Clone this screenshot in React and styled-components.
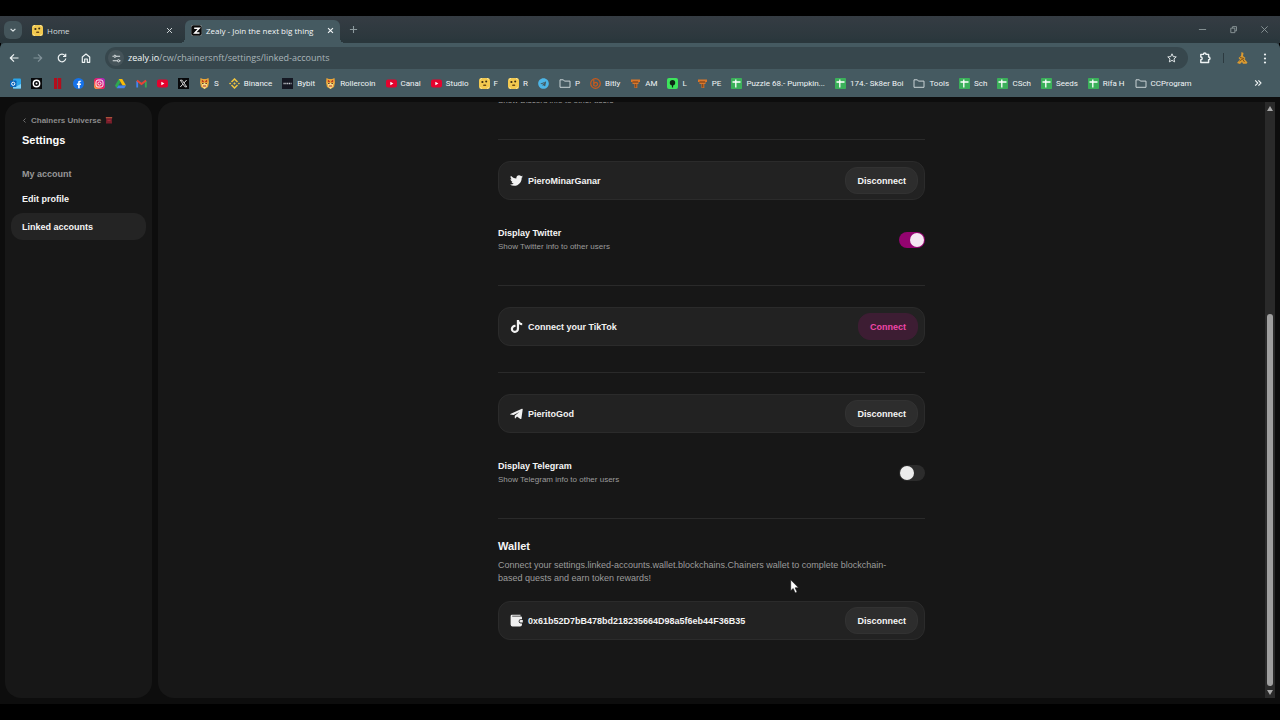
import React from 'react';
import styled, { createGlobalStyle } from 'styled-components';
import { FaTwitter, FaTiktok, FaFacebookF, FaTelegram } from 'react-icons/fa';

const GlobalStyle = createGlobalStyle`
  * {
    box-sizing: border-box;
  }

  body {
    margin: 0;
    background: #000;
    overflow: hidden;
    font-family: "Liberation Sans", Arial, sans-serif;
  }

  button {
    font: inherit;
    color: inherit;
    border: 0;
    padding: 0;
    background: none;
  }

  a {
    color: inherit;
    text-decoration: none;
  }

  svg {
    display: block;
    flex-shrink: 0;
  }
`;

const Screen = styled.div`
  display: flex;
  flex-direction: column;
  height: 100vh;
  padding: 16px 0;
`;

/* ---------- browser ---------- */

const TabStrip = styled.div`
  display: flex;
  align-items: center;
  height: 27px;
  flex-shrink: 0;
  padding: 0 6px 0 4px;
  background: linear-gradient(#353c43, #2a373c);
  font-family: "Open Sans", "Noto Sans", sans-serif;
  font-size: 8px;
  color: #dfe6e8;
`;

const TabSearch = styled.button`
  display: flex;
  align-items: center;
  justify-content: center;
  width: 18px;
  height: 18px;
  border-radius: 6px;
  background: #44555b;
`;

const Tab = styled.div`
  position: relative;
  display: flex;
  align-items: center;
  align-self: flex-end;
  gap: 4px;
  width: ${({ $active }) => ($active ? 155 : 153)}px;
  height: 23px;
  padding: 0 6px 3px;
  margin-left: ${({ $active }) => ($active ? 6 : 4)}px;
  border-radius: 6px 6px 0 0;
  background: ${({ $active }) => ($active ? '#455a61' : 'transparent')};
  color: ${({ $active }) => ($active ? '#f4f7f8' : '#d5dcde')};
  white-space: nowrap;

  &::before,
  &::after {
    content: '';
    display: ${({ $active }) => ($active ? 'block' : 'none')};
    position: absolute;
    bottom: 0;
    width: 5px;
    height: 5px;
  }

  &::before {
    right: 100%;
    background: radial-gradient(circle at 0 0, transparent 5px, #455a61 5px);
  }

  &::after {
    left: 100%;
    background: radial-gradient(circle at 100% 0, transparent 5px, #455a61 5px);
  }
`;

const TabTitle = styled.span`
  flex: 1;
`;

const WindowButtons = styled.div`
  display: flex;
  gap: 22px;
  margin-left: auto;
  padding-right: 5px;
  color: #8d989b;
`;

const NewTab = styled.button`
  margin-left: 9px;
  color: #8d9a9e;
`;

const Toolbar = styled.div`
  display: flex;
  align-items: center;
  gap: 14px;
  height: 30px;
  flex-shrink: 0;
  padding: 0 10px 0 9px;
  border-radius: 5px 5px 0 0;
  background: #455a61;
  box-shadow: 0 -5px 0 -1px #2a373c;
  color: #eef3f4;
`;

const NavButton = styled.button`
  color: ${({ $dim }) => ($dim ? '#82939a' : '#eef3f4')};
`;

const ToolbarActions = styled.div`
  display: flex;
  align-items: center;
  gap: 12px;
`;

const AddressBar = styled.label`
  display: flex;
  align-items: center;
  gap: 4px;
  flex: 1;
  height: 22px;
  margin-right: -3px;
  padding: 0 11px 0 3px;
  border-radius: 11px;
  background: #37474d;
`;

const SiteInfo = styled.button`
  display: flex;
  align-items: center;
  justify-content: center;
  width: 16px;
  height: 16px;
  border-radius: 8px;
  background: #455359;
`;

const Url = styled.span`
  flex: 1;
  font-family: "Open Sans", "Noto Sans", sans-serif;
  font-size: 9px;
  line-height: 12px;
  color: #a9b5b9;

  b {
    font-weight: 400;
    color: #f4f7f8;
  }
`;

const ToolbarDivider = styled.span`
  width: 1px;
  height: 10px;
  background: #2c3a40;
`;

const BookmarksBar = styled.nav`
  display: flex;
  align-items: center;
  gap: 10px;
  height: 24px;
  flex-shrink: 0;
  padding: 0 18px 4px 10px;
  background: #455a61;
  font-family: Roboto, "Open Sans", sans-serif;
  font-size: 8px;
  color: #f0f4f5;
  white-space: nowrap;
`;

const Bookmark = styled.a`
  display: flex;
  align-items: center;
  gap: 4px;
`;

const More = styled.button`
  margin-left: auto;
`;

/* ---------- page ---------- */

const Page = styled.div`
  display: flex;
  flex: 1;
  min-height: 0;
  padding: 5px 5px 6px;
  background: #0d0d0d;
`;

const Sidebar = styled.aside`
  width: 147px;
  flex-shrink: 0;
  margin-right: 6px;
  padding: 12px 6px;
  border-radius: 16px;
  background: #171717;
`;

const BackLink = styled.a`
  display: flex;
  align-items: center;
  gap: 4px;
  height: 12px;
  padding-left: 11px;
  font-size: 8px;
  font-weight: 700;
  color: #8c8c8c;
`;

const SidebarTitle = styled.h1`
  margin: 7px 0 21px;
  padding-left: 11px;
  font-size: 11px;
  line-height: 14px;
  color: #fff;
`;

const SidebarLabel = styled.h2`
  margin: 0 0 5px;
  padding-left: 11px;
  font-size: 9px;
  line-height: 12px;
  color: #979797;
`;

const SidebarItem = styled.a`
  display: flex;
  align-items: center;
  height: 27px;
  margin-bottom: 1px;
  padding-left: 11px;
  border-radius: 12px;
  background: ${({ $active }) => ($active ? '#242424' : 'transparent')};
  font-size: 9px;
  font-weight: 700;
  color: #f5f5f5;
`;

const Main = styled.main`
  flex: 1;
  overflow: hidden;
  border-radius: 16px 0 0 16px;
  background: #171717;
`;

const Content = styled.div`
  max-width: 427px;
  margin: -8px auto 0;
`;

const Caption = styled.span`
  display: block;
  font-size: 8px;
  line-height: 14px;
  color: #9c9c9c;
`;

const Section = styled.section`
  margin-top: ${({ $afterRow }) => ($afterRow ? 31 : 26)}px;
  padding-top: 21px;
  border-top: 1px solid #2a2a2a;
`;

const Card = styled.div`
  display: flex;
  align-items: center;
  gap: 5px;
  height: 39px;
  padding: 0 6px 0 11px;
  border: 1px solid #2b2b2b;
  border-radius: 12px;
  background: #222;
  font-size: 9px;
  font-weight: 700;
  color: #f2f2f2;
`;

const CardButton = styled.button`
  height: 27px;
  margin-left: auto;
  padding: 0 11px;
  border: 1px solid ${({ $accent }) => ($accent ? '#3d1d33' : '#323232')};
  border-radius: 12px;
  background: ${({ $accent }) => ($accent ? '#3d1d33' : '#2d2d2d')};
  color: ${({ $accent }) => ($accent ? '#ee46a8' : '#f5f5f5')};
`;

const SettingRow = styled.label`
  display: flex;
  align-items: center;
  justify-content: space-between;
  margin-top: 26px;
`;

const SettingName = styled.span`
  display: block;
  font-size: 9px;
  font-weight: 700;
  line-height: 14px;
  color: #f5f5f5;
`;

const Switch = styled.input`
  appearance: none;
  display: flex;
  align-items: center;
  width: 26px;
  height: 16px;
  margin: 0;
  padding: 0 1px;
  border-radius: 8px;
  background: #2c2c2c;

  &::before {
    content: '';
    width: 14px;
    height: 14px;
    border-radius: 50%;
    background: #ededed;
  }

  &:checked {
    justify-content: flex-end;
    background: #930470;
  }

  &:checked::before {
    background: #f5e6f2;
  }
`;

const WalletTitle = styled.h2`
  margin: 0 0 7px;
  font-size: 11px;
  line-height: 12px;
  color: #f5f5f5;
`;

const WalletText = styled.p`
  position: relative;
  margin: 0 0 16px;
  padding-right: 24px;
  font-size: 9px;
  line-height: 13px;
  color: #9c9c9c;
`;

const Pointer = styled.svg`
  position: absolute;
  top: 20px;
  left: 292px;
`;

const Scrollbar = styled.div`
  display: flex;
  flex-direction: column;
  align-items: center;
  width: 10px;
  padding: 4px 0 3px;
  background: #2a2a2a;
`;

const ScrollTrack = styled.div`
  display: flex;
  flex-direction: column;
  justify-content: flex-end;
  flex: 1;
  width: 6px;
  margin: 2px 0 4px;
`;

const ScrollThumb = styled.div`
  height: 65%;
  border-radius: 3px;
  background: #9f9f9f;
`;

/* ---------- icons ---------- */

const Stroke = ({ d, size = 10, width = 1.2 }) => (
  <svg width={size} height={size} viewBox="0 0 10 10" fill="none" stroke="currentColor" strokeWidth={width} strokeLinejoin="round">
    <path d={d} />
  </svg>
);

const Glyph = ({ children }) => (
  <svg width="11" height="11" viewBox="0 0 11 11">{children}</svg>
);

const Chainers = () => (
  <Glyph>
    <rect width="11" height="11" rx="2.5" fill="#f2c94f" />
    <path d="M1 1.500L3 .3M8 .3l2 1.200M1 9.500l2 1M8 10.500l2-1" stroke="#fae6a0" />
    <circle cx="3.400" cy="4" r="1.100" fill="#3a2a12" />
    <circle cx="7.200" cy="3.400" r="1" fill="#3a2a12" />
    <rect x="4.200" y="6.500" width="3" height="1.600" rx=".6" fill="#6b4a18" />
  </Glyph>
);

const Hamster = () => (
  <Glyph>
    <path d="M1.500 0l2.300 1h3.400l2.300-1 .5 4.500-1 4.500-3.500 2L2 9 1 4.500z" fill="#e9a43a" />
    <path d="M2.500 5h6l-1 4-2 2-2-2z" fill="#f7dc8b" />
    <path d="M3 2.500l1.500 1.500M8 2.500L6.500 4M4 8h3" stroke="#b3261e" strokeWidth="1.200" />
    <path d="M3.200 5.500h1.300M6.500 5.500h1.300" stroke="#3b2210" />
  </Glyph>
);

const Youtube = () => (
  <Glyph>
    <rect y="1.500" width="11" height="8" rx="2" fill="#e4032e" />
    <path d="M4.300 3.700v3.600l3.100-1.800z" fill="#fff" />
  </Glyph>
);

const Sheet = () => (
  <Glyph>
    <rect width="11" height="11" rx=".8" fill="#3bb05a" />
    <path d="M1.500 4h8M4.800 1.500v8" stroke="#fff" strokeWidth="1.300" />
  </Glyph>
);

const Folder = () => (
  <svg width="12" height="11" viewBox="0 0 12 11" fill="none" stroke="#c9d2d5">
    <path d="M1 1.800h3.400l1 1.300H11v6.200H1z" strokeLinejoin="round" />
  </svg>
);

const Miner = () => (
  <Glyph>
    <path d="M1 1.500h9v2.500H8.500V6H7.300v4H4.500V6H2.500V4H1z" fill="#d9772b" />
    <path d="M2.500 4h5.500M5.800 6v3.500" stroke="#6b3412" />
  </Glyph>
);

const Outlook = () => (
  <Glyph>
    <rect x="3" y=".5" width="8" height="10" rx="1" fill="#2ba5ea" />
    <path d="M3 6l4 2 4-2v4.500H3z" fill="#7fd3fb" />
    <rect y="2.500" width="6.500" height="6.500" rx=".8" fill="#0b64b8" />
    <circle cx="3.250" cy="5.750" r="1.600" fill="none" stroke="#fff" />
  </Glyph>
);

const Target = () => (
  <Glyph>
    <rect width="11" height="11" fill="#08090b" />
    <circle cx="5.500" cy="5.500" r="3.200" fill="none" stroke="#fff" strokeWidth="1.400" />
    <circle cx="5.500" cy="5.500" r="1" fill="#fff" />
  </Glyph>
);

const RedBars = () => (
  <Glyph>
    <path d="M2 0h3.200v11H2zM6 0h3.200v11H6z" fill="#b40d1c" />
  </Glyph>
);

const Facebook = () => (
  <Glyph>
    <circle cx="5.500" cy="5.500" r="5.500" fill="#1673ea" />
    <FaFacebookF x="2" y="2.500" size={8} color="#fff" />
  </Glyph>
);

const Instagram = () => (
  <Glyph>
    <defs>
      <linearGradient id="insta" x1="0" y1="1" x2="1" y2="0">
        <stop offset="0" stopColor="#fdb43c" />
        <stop offset=".45" stopColor="#ec1f5e" />
        <stop offset="1" stopColor="#a02bd0" />
      </linearGradient>
    </defs>
    <rect width="11" height="11" rx="2.800" fill="url(#insta)" />
    <rect x="2" y="2" width="7" height="7" rx="2" fill="none" stroke="#fff" strokeWidth=".9" />
    <circle cx="5.500" cy="5.500" r="1.600" fill="none" stroke="#fff" strokeWidth=".9" />
  </Glyph>
);

const Drive = () => (
  <Glyph>
    <path d="M3.800 1L0 7.500l1.700 2.700L5.500 4z" fill="#2da94f" />
    <path d="M3.800 1h3.400L11 7.500H7.600z" fill="#fbbc05" />
    <path d="M3.300 7.500H11l-1.700 2.700H1.700z" fill="#4285f4" />
  </Glyph>
);

const Gmail = () => (
  <Glyph>
    <path d="M1.200 9.500V3" stroke="#4285f4" strokeWidth="1.800" />
    <path d="M9.800 9.500V3" stroke="#34a853" strokeWidth="1.800" />
    <path d="M1 2.500l4.500 3.600L10 2.500" fill="none" stroke="#ea4335" strokeWidth="1.900" />
  </Glyph>
);

const XLogo = () => (
  <Glyph>
    <rect width="11" height="11" fill="#08090b" />
    <path d="M2.300 2.200h1.800l4.600 6.600H6.900z" fill="none" stroke="#fff" strokeWidth=".8" />
    <path d="M8.600 2L6.100 4.900M4.800 6.200L2.300 9" stroke="#fff" strokeWidth=".9" />
  </Glyph>
);

const Binance = () => (
  <Glyph>
    <path d="M2.500 4L5.500 1l3 3M2.500 7l3 3 3-3" fill="none" stroke="#f0c53f" strokeWidth="1.500" />
    <path d="M5.500 4.200l1.300 1.300-1.300 1.300-1.300-1.300zM1.100 4.400l1.100 1.100-1.100 1.100L0 5.500zM9.900 4.400L11 5.500 9.900 6.600 8.800 5.500z" fill="#f0c53f" />
  </Glyph>
);

const Bybit = () => (
  <Glyph>
    <rect width="11" height="11" fill="#151823" />
    <path d="M1.500 5.500h8" stroke="#c9ccd2" strokeDasharray="1.200 .6" strokeWidth="1.500" />
  </Glyph>
);

const Bitly = () => (
  <Glyph>
    <circle cx="5.500" cy="5.500" r="4.800" fill="none" stroke="#c95a1c" strokeWidth="1.200" />
    <path d="M3.800 1.500v6.500M3.800 6c2-3 4.500-1 3.500 1-.8 1.600-2.600 1.200-3.500.4" fill="none" stroke="#c95a1c" strokeWidth="1.200" />
  </Glyph>
);

const Leaf = () => (
  <Glyph>
    <rect width="11" height="11" rx="2" fill="#3de45c" />
    <circle cx="5.500" cy="4.700" r="2.700" fill="#0d2613" />
    <path d="M5.500 5v4.500" stroke="#0d2613" strokeWidth="1.200" />
  </Glyph>
);

const Zealy = () => (
  <Glyph>
    <rect width="11" height="11" rx="2.500" fill="#0a0a0a" stroke="#c7d0d3" strokeWidth=".5" />
    <path d="M3.200 3.300h5L3.800 8h4.700" fill="none" stroke="#fff" strokeWidth="1.500" />
  </Glyph>
);

const Avatar = () => (
  <svg width="12" height="12" viewBox="0 0 12 12">
    <path d="M5.500 0l2 1-.5 3 2.500 2-1 1 3 3.500-1 1.300H7L6 10l-2 2-3-1 3-3.500L2.500 6 5 4z" fill="#d99a32" />
    <path d="M4 5.500l4 1M3.500 9l3-2 2 3" fill="none" stroke="#6a4312" strokeWidth=".8" />
  </svg>
);

const TelegramPlane = () => (
  <svg width="13" height="13" viewBox="0 0 13 13">
    <path d="M.3 6.900L11.900 1.700c.5-.2.900.1.800.7l-1.300 9.100c-.1.600-.6.700-1 .4L7 9.600l-1.500 1.700c-.3.300-.7.200-.7-.3V8.700L9.300 4.900 3.600 8.100.4 7.600c-.4-.1-.5-.500-.1-.7z" fill="#f2f2f2" />
  </svg>
);

const WalletIcon = () => (
  <svg width="13" height="13" viewBox="0 0 13 13">
    <path d="M2 .8h8.500v1H2.200v.8h8.600c.7 0 1.200.5 1.200 1.200v1.400h-1.300a2.100 2.100 0 000 4.200H12v1.200a1.900 1.900 0 01-1.900 1.900H2.500A1.900 1.900 0 01.600 10.600V2.200A1.400 1.400 0 012 .8z" fill="#f0f0f0" />
    <path d="M12.800 6v2.600h-2.100a1.300 1.300 0 010-2.600z" fill="#f0f0f0" />
  </svg>
);

const Lantern = () => (
  <svg width="8" height="8" viewBox="0 0 8 8">
    <path d="M.5 1h7L6.800 3.500 7 7.500H1L1.200 3.500z" fill="#7c1f2b" />
    <path d="M1 1h6v1.200H1z" fill="#a8543a" />
    <path d="M2.500 4.500h3" stroke="#a02c3a" />
  </svg>
);

const bookmarks = [
  { Icon: Outlook },
  { Icon: Target },
  { Icon: RedBars },
  { Icon: Facebook },
  { Icon: Instagram },
  { Icon: Drive },
  { Icon: Gmail },
  { Icon: Youtube },
  { Icon: XLogo },
  { Icon: Hamster, name: 'S' },
  { Icon: Binance, name: 'Binance' },
  { Icon: Bybit, name: 'Bybit' },
  { Icon: Hamster, name: 'Rollercoin' },
  { Icon: Youtube, name: 'Canal' },
  { Icon: Youtube, name: 'Studio' },
  { Icon: Chainers, name: 'F' },
  { Icon: Chainers, name: 'R' },
  { Icon: () => <FaTelegram size={11} color="#4db5e6" /> },
  { Icon: Folder, name: 'P' },
  { Icon: Bitly, name: 'Bitly' },
  { Icon: Miner, name: 'AM' },
  { Icon: Leaf, name: 'L' },
  { Icon: Miner, name: 'PE' },
  { Icon: Sheet, name: 'Puzzle 68.- Pumpkin...' },
  { Icon: Sheet, name: '174.- Sk8er Boi' },
  { Icon: Folder, name: 'Tools' },
  { Icon: Sheet, name: 'Sch' },
  { Icon: Sheet, name: 'CSch' },
  { Icon: Sheet, name: 'Seeds' },
  { Icon: Sheet, name: 'Rifa H' },
  { Icon: Folder, name: 'CCProgram' },
];

const Browser = () => (
  <>
    <TabStrip>
      <TabSearch aria-label="Search tabs"><Stroke size={8} width={1.5} d="M2 3.500l3 3 3-3" /></TabSearch>
      <Tab>
        <Chainers />
        <TabTitle>Home</TabTitle>
        <button aria-label="Close tab"><Stroke size={7} width={1.4} d="M1.500 1.500l7 7M8.500 1.500l-7 7" /></button>
      </Tab>
      <Tab $active>
        <Zealy />
        <TabTitle>Zealy - Join the next big thing</TabTitle>
        <button aria-label="Close tab"><Stroke size={7} width={1.6} d="M1.500 1.500l7 7M8.500 1.500l-7 7" /></button>
      </Tab>
      <NewTab aria-label="New tab"><Stroke size={9} d="M5 1v8M1 5h8" /></NewTab>
      <WindowButtons>
        <button aria-label="Minimize"><Stroke size={9} width={1} d="M1 5h8" /></button>
        <button aria-label="Restore"><Stroke size={9} width={1} d="M2 3.500h4.500V8.500H2zM4 3.500V1.800h4.300V6.500H6.500" /></button>
        <button aria-label="Close"><Stroke size={9} width={1} d="M1.500 1.500l7 7M8.500 1.500l-7 7" /></button>
      </WindowButtons>
    </TabStrip>
    <Toolbar>
      <NavButton aria-label="Back"><Stroke d="M9.500 5H1.500M5 1.300L1.300 5 5 8.700" /></NavButton>
      <NavButton aria-label="Forward" $dim><Stroke d="M.5 5h8M5 1.300L8.700 5 5 8.700" /></NavButton>
      <NavButton aria-label="Reload"><Stroke d="M8.800 5.500A3.800 3.800 0 118 2.600M8.700.8v2.700H6" /></NavButton>
      <NavButton aria-label="Home page"><Stroke d="M1.300 9.300V4L5 1l3.700 3v5.300H6.300V6H3.700v3.300z" /></NavButton>
      <AddressBar>
        <SiteInfo aria-label="Site information">
          <Stroke size={9} width={1} d="M.5 2.500h1M4.500 2.500H9M5.500 7.500H.8M8.500 7.500h1M2 2.500a1.200 1.200 0 102.400 0 1.200 1.200 0 10-2.400 0M6 7.500a1.200 1.200 0 102.400 0 1.200 1.200 0 10-2.400 0" />
        </SiteInfo>
        <Url><b>zealy.io</b>/cw/chainersnft/settings/linked-accounts</Url>
        <button aria-label="Bookmark this page">
          <Stroke width={0.9} d="M5 .8l1.250 2.800 3 .3L7 5.900l.65 3L5 7.350 2.350 8.900l.65-3L.75 3.900l3-.3z" />
        </button>
      </AddressBar>
      <ToolbarActions>
        <NavButton aria-label="Extensions">
          <Stroke size={12} d="M1.500 2h2.200a1.100 1.100 0 012.200 0H8v2.200a1.100 1.100 0 010 2.300v2.200H1.500V6.500a1.100 1.100 0 000-2.300z" />
        </NavButton>
        <ToolbarDivider />
        <NavButton aria-label="Profile"><Avatar /></NavButton>
        <NavButton aria-label="Menu">
          <svg width="10" height="11" viewBox="0 0 10 11" fill="currentColor">
            <circle cx="5" cy="1.500" r="1.100" />
            <circle cx="5" cy="5.500" r="1.100" />
            <circle cx="5" cy="9.500" r="1.100" />
          </svg>
        </NavButton>
      </ToolbarActions>
    </Toolbar>
    <BookmarksBar>
      {bookmarks.map(({ Icon, name }, index) => (
        <Bookmark key={index} href="#">
          <Icon />
          {name}
        </Bookmark>
      ))}
      <More aria-label="More bookmarks"><Stroke size={8} width={1.4} d="M1.500 1.800L4.700 5 1.500 8.200M5.500 1.800L8.700 5 5.500 8.200" /></More>
    </BookmarksBar>
  </>
);

const Account = ({ icon, name, action = 'Disconnect' }) => (
  <Card>
    {icon}
    {name}
    <CardButton $accent={action === 'Connect'}>{action}</CardButton>
  </Card>
);

const DisplaySetting = ({ network, checked }) => (
  <SettingRow>
    <span>
      <SettingName>Display {network}</SettingName>
      <Caption>Show {network} info to other users</Caption>
    </span>
    <Switch type="checkbox" defaultChecked={checked} />
  </SettingRow>
);

const App = () => {
  return (
    <>
      <GlobalStyle />
      <Screen>
        <Browser />
        <Page>
          <Sidebar>
            <BackLink href="#">
              <Stroke size={5} width={1.5} d="M7 1L3 5l4 4" />
              Chainers Universe
              <Lantern />
            </BackLink>
            <SidebarTitle>Settings</SidebarTitle>
            <SidebarLabel>My account</SidebarLabel>
            <SidebarItem href="#">Edit profile</SidebarItem>
            <SidebarItem href="#" $active>Linked accounts</SidebarItem>
          </Sidebar>
          <Main>
            <Content>
              <Caption>Show Discord info to other users</Caption>
              <Section $afterRow>
                <Account icon={<FaTwitter size={13} />} name="PieroMinarGanar" />
                <DisplaySetting network="Twitter" checked />
              </Section>
              <Section $afterRow>
                <Account icon={<FaTiktok size={13} />} name="Connect your TikTok" action="Connect" />
              </Section>
              <Section>
                <Account icon={<TelegramPlane />} name="PieritoGod" />
                <DisplaySetting network="Telegram" />
              </Section>
              <Section $afterRow>
                <WalletTitle>Wallet</WalletTitle>
                <WalletText>
                  Connect your settings.linked-accounts.wallet.blockchains.Chainers wallet to complete blockchain-based quests and earn token rewards!
                  <Pointer width="10" height="15" viewBox="0 0 10 15">
                    <path d="M.7.800v11l2.500-2.300 2 4.400 1.900-.9-2-4.200h3.500z" fill="#fff" stroke="#111" strokeWidth=".6" />
                  </Pointer>
                </WalletText>
                <Account icon={<WalletIcon />} name="0x61b52D7bB478bd218235664D98a5f6eb44F36B35" />
              </Section>
            </Content>
          </Main>
          <Scrollbar>
            <svg width="6" height="5" viewBox="0 0 6 5"><path d="M3 0l3 5H0z" fill="#a8a8a8" /></svg>
            <ScrollTrack><ScrollThumb /></ScrollTrack>
            <svg width="6" height="5" viewBox="0 0 6 5"><path d="M3 5l3-5H0z" fill="#a8a8a8" /></svg>
          </Scrollbar>
        </Page>
      </Screen>
    </>
  );
};

export default App;
